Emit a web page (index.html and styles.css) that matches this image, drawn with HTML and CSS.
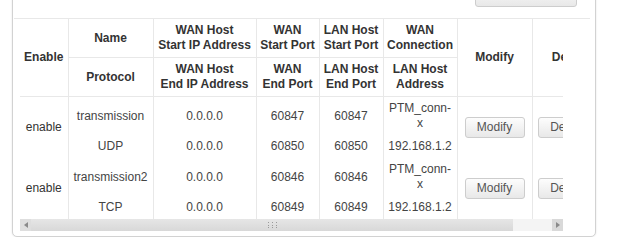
FILE: index.html
```html
<!DOCTYPE html>
<html>
<head>
<meta charset="utf-8">
<link rel="stylesheet" href="styles.css">
</head>
<body>
<div class="panel">
  <div class="toolbar"><button class="btn top-btn" aria-label="Add"></button></div>
  <div class="sep"></div>
  <div class="scroller">
    <div class="clip">
      <table class="grid">
        <colgroup>
          <col class="c-enable"><col class="c-name"><col class="c-ip"><col class="c-port"><col class="c-lport"><col class="c-conn"><col class="c-mod"><col class="c-del">
        </colgroup>
        <thead>
          <tr>
            <th rowspan="2" class="first">Enable</th>
            <th>Name</th>
            <th>WAN Host<br>Start IP Address</th>
            <th>WAN<br>Start Port</th>
            <th>LAN Host<br>Start Port</th>
            <th>WAN<br>Connection</th>
            <th rowspan="2">Modify</th>
            <th rowspan="2">Delete</th>
          </tr>
          <tr>
            <th>Protocol</th>
            <th>WAN Host<br>End IP Address</th>
            <th>WAN<br>End Port</th>
            <th>LAN Host<br>End Port</th>
            <th>LAN Host<br>Address</th>
          </tr>
        </thead>
        <tbody>
          <tr>
            <td rowspan="2" class="first">enable</td>
            <td>transmission</td>
            <td>0.0.0.0</td>
            <td>60847</td>
            <td>60847</td>
            <td>PTM_conn-<br>x</td>
            <td rowspan="2"><button class="btn act">Modify</button></td>
            <td rowspan="2" class="del"><button class="btn act">Delete</button></td>
          </tr>
          <tr>
            <td>UDP</td>
            <td>0.0.0.0</td>
            <td>60850</td>
            <td>60850</td>
            <td>192.168.1.2</td>
          </tr>
          <tr>
            <td rowspan="2" class="first">enable</td>
            <td>transmission2</td>
            <td>0.0.0.0</td>
            <td>60846</td>
            <td>60846</td>
            <td>PTM_conn-<br>x</td>
            <td rowspan="2"><button class="btn act">Modify</button></td>
            <td rowspan="2" class="del"><button class="btn act">Delete</button></td>
          </tr>
          <tr>
            <td>TCP</td>
            <td>0.0.0.0</td>
            <td>60849</td>
            <td>60849</td>
            <td>192.168.1.2</td>
          </tr>
        </tbody>
      </table>
    </div>
    <div class="hscroll">
      <div class="sb-btn sb-left"><svg width="4" height="6" viewBox="0 0 4 6"><path d="M4 0 L0 3 L4 6 Z" fill="#8a8a8a"/></svg></div>
      <div class="sb-thumb"><svg width="9" height="6" viewBox="0 0 9 6"><g fill="#9a9a9a"><rect x="0" y="0" width="1" height="1"/><rect x="4" y="0" width="1" height="1"/><rect x="8" y="0" width="1" height="1"/><rect x="0" y="3" width="1" height="1"/><rect x="4" y="3" width="1" height="1"/><rect x="8" y="3" width="1" height="1"/><rect x="0" y="5" width="1" height="1"/><rect x="4" y="5" width="1" height="1"/><rect x="8" y="5" width="1" height="1"/></g></svg></div>
      <div class="sb-track"></div>
      <div class="sb-btn sb-right"><svg width="4" height="6" viewBox="0 0 4 6"><path d="M0 0 L4 3 L0 6 Z" fill="#8a8a8a"/></svg></div>
    </div>
  </div>
</div>
</body>
</html>
```
FILE: styles.css
```css
html, body {
  margin: 0;
  padding: 0;
  background: #ffffff;
}
body {
  font-family: "Liberation Sans", Arial, sans-serif;
  font-size: 12px;
  color: #333;
  overflow: hidden;
}
.panel {
  margin: -30px 0 0 12px;
  width: 584px;
  box-sizing: border-box;
  border: 1px solid #d2d2d2;
  border-radius: 5px;
  box-shadow: 0 0 2px rgba(0,0,0,0.12);
  padding-bottom: 5px;
  background: #fff;
}
.toolbar {
  display: flex;
  justify-content: flex-end;
  padding: 12px 18px 0 0;
}
.btn {
  font-family: "Liberation Sans", Arial, sans-serif;
  font-size: 12px;
  color: #555;
  background: linear-gradient(#fdfdfd, #e8e8e8);
  border: 1px solid #cdcdcd;
  border-radius: 3px;
  box-sizing: border-box;
  padding: 0;
  cursor: pointer;
}
.top-btn {
  width: 102px;
  height: 24px;
}
.sep {
  margin: 11px 5px 0 1px;
  border-top: 1px solid #e8e8e8;
}
.scroller {
  margin-left: 7px;
  width: 543px;
}
.clip {
  overflow: hidden;
  width: 543px;
}
.grid {
  border-collapse: collapse;
  table-layout: fixed;
  width: 587px;
}
.c-enable { width: 48px; }
.c-name { width: 85px; }
.c-ip { width: 103px; }
.c-port { width: 63px; }
.c-lport { width: 64px; }
.c-conn { width: 74px; }
.c-mod { width: 75px; }
.c-del { width: 75px; }
.grid th, .grid td {
  padding: 4px 3px;
  line-height: 15px;
  text-align: center;
  vertical-align: middle;
  border-left: 1px solid #e8e8e8;
  white-space: nowrap;
}
.grid th.first, .grid td.first {
  border-left: none;
}
.grid th {
  font-weight: bold;
  color: #333;
  border-bottom: 1px solid #e8e8e8;
}
.grid td {
  color: #444;
}
.grid td.first {
  color: #333;
}
.act {
  width: 60px;
  height: 21px;
  line-height: 19px;
  color: #555;
}
.grid td.del {
  text-align: left;
  padding-left: 5px;
}
.hscroll {
  display: flex;
  height: 12px;
  width: 543px;
  background: #f2f2f2;
}
.sb-btn {
  width: 11px;
  display: flex;
  align-items: center;
  justify-content: center;
}
.sb-left {
  background: #dedede;
}
.sb-right {
  background: #d9d9d9;
}
.sb-thumb {
  width: 482px;
  background: linear-gradient(#e6e6e6, #d8d8d8);
  display: flex;
  align-items: center;
  justify-content: center;
}
.sb-track {
  flex: 1;
  background: #f4f4f4;
}
```
